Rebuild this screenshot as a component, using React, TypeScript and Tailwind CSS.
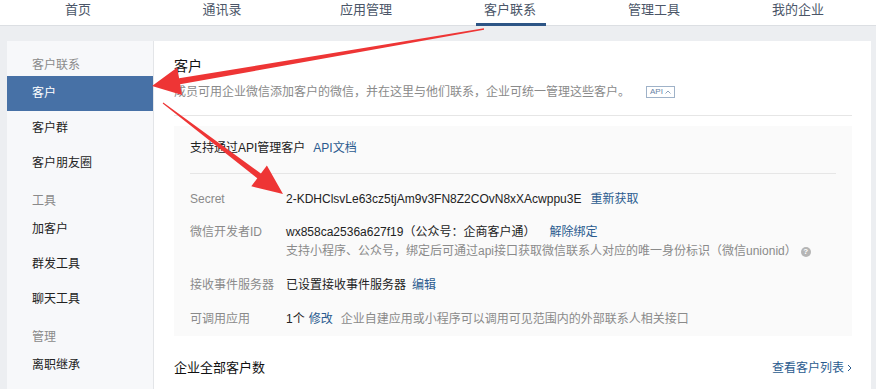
import React from 'react';

const navItems = ['首页', '通讯录', '应用管理', '客户联系', '管理工具', '我的企业'];

const sideGroups = [
    { title: '客户联系', items: ['客户', '客户群', '客户朋友圈'] },
    { title: '工具', items: ['加客户', '群发工具', '聊天工具'] },
    { title: '管理', items: ['离职继承'] },
];

function TopNav() {
    return (
        <div className="h-[26px] bg-white border-b border-[#dcdfe3] flex pl-[6px]">
            {navItems.map((item) => (
                <div key={item} className="w-[144px] relative flex justify-center">
                    <span className="text-[13px] leading-[20px] text-[#4b5668]">{item}</span>
                    {item === '客户联系' && (
                        <div className="absolute bottom-[-1px] left-[38px] w-[70px] h-[3px] bg-[#2d5586]" />
                    )}
                </div>
            ))}
        </div>
    );
}

function Sidebar() {
    return (
        <div className="w-[147px] shrink-0 bg-[#f7f8fa] border-r border-[#e3e5e8] pt-[13px]">
            {sideGroups.map((group, gi) => (
                <div key={group.title} className={gi > 0 ? 'mt-[9px]' : ''}>
                    <div className="h-[22px] leading-[22px] pl-[25px] text-[12px] text-[#8a8a8a]">{group.title}</div>
                    {group.items.map((item) => (
                        <div
                            key={item}
                            className={
                                item === '客户'
                                    ? 'h-[35px] leading-[35px] pl-[25px] text-[12px] bg-[#4771a6] text-white'
                                    : 'h-[35px] leading-[35px] pl-[25px] text-[12px] text-[#222]'
                            }
                        >
                            {item}
                        </div>
                    ))}
                </div>
            ))}
        </div>
    );
}

function InfoRow({ label, children }: { label: string; children: React.ReactNode }) {
    return (
        <div className="flex py-[7px] text-[12px] leading-[20px]">
            <div className="w-[96px] shrink-0 text-[#8a8a8a]">{label}</div>
            <div className="flex-1">{children}</div>
        </div>
    );
}

function MainPanel() {
    return (
        <div className="flex-1 bg-white pl-[20px] pr-[19px] pt-[15px]">
            <div className="pb-[13px] border-b border-[#e6e6e6]">
                <div className="text-[14px] leading-[20px] text-[#111]">客户</div>
                <div className="mt-[6px] text-[12px] leading-[20px] text-[#8a8a8a] flex items-center">
                    成员可用企业微信添加客户的微信，并在这里与他们联系，企业可统一管理这些客户。
                    <span className="ml-[16px] h-[12px] px-[3px] border border-[#9fb2c8] text-[8px] leading-[10px] text-[#6683a6] flex items-center gap-[2px]">
                        API
                        <svg width="6" height="4" viewBox="0 0 6 4">
                            <path d="M0.5 3.5 L3 1 L5.5 3.5" fill="none" stroke="#7f97b3" strokeWidth="0.9" />
                        </svg>
                    </span>
                </div>
            </div>

            <div className="mt-[10px] bg-[#fafafa] px-[16px]">
                <div className="pt-[12px] pb-[15px] border-b border-[#e6e6e6] text-[12px] leading-[20px] text-[#222]">
                    支持通过API管理客户<span className="ml-[8px] text-[#2a5b8f]">API文档</span>
                </div>
                <div className="mt-[8px]">
                    <InfoRow label="Secret">
                        <span className="text-[#222]">2-KDHClsvLe63cz5tjAm9v3FN8Z2COvN8xXAcwppu3E</span>
                        <span className="ml-[9px] text-[#2a5b8f]">重新获取</span>
                    </InfoRow>
                    <div className="flex py-[7px] text-[12px] leading-[19px]">
                        <div className="w-[96px] shrink-0 text-[#8a8a8a]">微信开发者ID</div>
                        <div className="flex-1">
                            <div>
                                <span className="text-[#222]">wx858ca2536a627f19（公众号：企商客户通）</span>
                                <span className="ml-[14px] text-[#2a5b8f]">解除绑定</span>
                            </div>
                            <div className="text-[#8a8a8a] flex items-center">
                                支持小程序、公众号，绑定后可通过api接口获取微信联系人对应的唯一身份标识（微信unionid）
                                <span className="ml-[4px] w-[10px] h-[10px] rounded-full bg-[#b5b5b5] text-white text-[8px] leading-[10px] text-center font-bold">?</span>
                            </div>
                        </div>
                    </div>
                    <InfoRow label="接收事件服务器">
                        <span className="text-[#222]">已设置接收事件服务器</span>
                        <span className="ml-[6px] text-[#2a5b8f]">编辑</span>
                    </InfoRow>
                    <InfoRow label="可调用应用">
                        <span className="text-[#222]">1个</span>
                        <span className="ml-[4px] text-[#2a5b8f]">修改</span>
                        <span className="ml-[8px] text-[#8a8a8a]">企业自建应用或小程序可以调用可见范围内的外部联系人相关接口</span>
                    </InfoRow>
                </div>
            </div>

            <div className="mt-[22px] flex justify-between items-center text-[13px] leading-[20px]">
                <span className="text-[#111]">企业全部客户数</span>
                <span className="text-[#2a5b8f] text-[12px] flex items-center gap-[3px]">
                    查看客户列表
                    <svg width="5" height="8" viewBox="0 0 5 8">
                        <path d="M1 1 L4 4 L1 7" fill="none" stroke="#2a5b8f" strokeWidth="1" />
                    </svg>
                </span>
            </div>
        </div>
    );
}

function Arrows() {
    return (
        <svg className="absolute inset-0 pointer-events-none" width="876" height="389" viewBox="0 0 876 389">
            <polygon
                points="483.9,28.3 179.1,78.3 177.2,67.5 152,86 182,95.1 180.1,84.3 484.1,29.7"
                fill="#ee3535"
            />
            <polygon
                points="162.7,103.4 257.3,178.3 251.3,186.3 283,194 266.9,165.5 260.9,173.5 163.3,102.6"
                fill="#ee3535"
            />
        </svg>
    );
}

export default function App() {
    return (
        <div
            className="relative w-[876px] h-[389px] overflow-hidden bg-[#eceef1]"
            style={{ fontFamily: '"Liberation Sans", "Noto Sans CJK SC", sans-serif' }}
        >
            <TopNav />
            <div className="flex mt-[15px] ml-[7px] mr-[5px] h-[360px]">
                <Sidebar />
                <MainPanel />
            </div>
            <Arrows />
        </div>
    );
}
